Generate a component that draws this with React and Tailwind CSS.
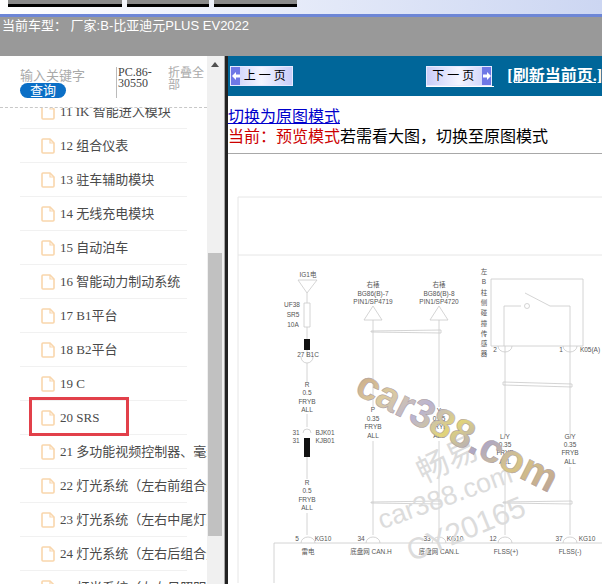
const CJK = "'Liberation Serif', 'Noto Sans CJK SC', serif";

const ROWS = [
  '11 IK 智能进入模块', '12 组合仪表', '13 驻车辅助模块', '14 无线充电模块', '15 自动泊车',
  '16 智能动力制动系统', '17 B1平台', '18 B2平台', '19 C', '20 SRS',
  '21 多功能视频控制器、毫米波雷达', '22 灯光系统（左右前组合灯）', '23 灯光系统（左右中尾灯）',
  '24 灯光系统（左右后组合灯）', '25 灯光系统（左右日照明灯）',
];

// x, y, text for the wiring diagram, in page coordinates
const LABELS = [
  [308, 278, 'IG1电'], [292, 308, 'UF38'], [293, 318, 'SR5'], [293, 328, '10A'], [308, 358, '27 B1C'],
  [373, 288, '右裱'], [373, 297, 'BG86(B)-7'], [373, 305, 'PIN1/SP4719'],
  [439, 288, '右裱'], [439, 297, 'BG86(B)-8'], [439, 305, 'PIN1/SP4720'],
  [307, 388, 'R'], [307, 396, '0.5'], [307, 405, 'FRYB'], [307, 413, 'ALL'],
  [296, 436, '31'], [296, 444, '31'], [325, 436, 'BJK01'], [325, 444, 'KJB01'],
  [307, 486, 'R'], [307, 494, '0.5'], [307, 503, 'FRYB'], [307, 511, 'ALL'],
  [373, 413, 'P'], [373, 422, '0.35'], [373, 430, 'FRYB'], [373, 439, 'ALL'],
  [439, 414, 'Y'], [439, 422, '0.35'], [439, 430, 'FRYB'], [439, 439, 'ALL'],
  [505, 440, 'L/Y'], [505, 448, '0.35'], [505, 456, 'FRYB'], [505, 465, 'ALL'],
  [570, 440, 'G/Y'], [570, 448, '0.35'], [570, 456, 'FRYB'], [570, 465, 'ALL'],
  [495, 353, '2'], [561, 353, '1'], [590, 353, 'K05(A)'],
  [297, 542, '5'], [323, 542, 'KG10'], [361, 542, '34'], [427, 542, '33'], [455, 542, 'KG10'],
  [493, 542, '12'], [559, 542, '37'], [587, 542, 'KG10'],
  [308, 555, '雷电'], [371, 555, '底盘网 CAN.H'], [439, 555, '底盘网 CAN.L'], [506, 555, 'FLSS(+)'], [570, 555, 'FLSS(-)'],
];

const SIDE_TEXT = ['左', 'B', '柱', '侧', '碰', '撞', '传', '感', '器'];

function FileIcon() {
  return (
    <svg width="14" height="16" viewBox="0 0 14 16" fill="none" className="shrink-0">
      <path d="M1 2a1 1 0 0 1 1-1h7l4 4v9a1 1 0 0 1-1 1H2a1 1 0 0 1-1-1z" stroke="#f9d6ac" strokeWidth="1.6" />
      <path d="M9 1v4h4" stroke="#f9d6ac" strokeWidth="1.2" />
    </svg>
  );
}

function PageButton({ label, next }) {
  const cap = (
    <span className="w-[9px] h-full bg-[#6f78e6] flex items-center justify-center">
      <svg width="8" height="8" viewBox="0 0 8 8" className={next ? '' : 'rotate-180'}>
        <path d="M0 4l4-4v2.500h4v3H4V8z" fill="#fff" transform="rotate(180 4 4)" />
      </svg>
    </span>
  );
  return (
    <div className="w-[66px] h-[20px] flex items-stretch border border-[#e6e9ff] bg-gradient-to-r from-[#c9cdf8] via-[#f4f5ff] to-[#c9cdf8] text-[12px] text-black">
      {!next && cap}
      <span className="flex-1 text-center leading-[18px] tracking-[3px]">{label}</span>
      {next && cap}
    </div>
  );
}

function Diagram() {
  return (
    <svg viewBox="228 155 374 429" className="block w-[374px] h-[429px]" fill="none">
      <defs>
        <linearGradient id="mark" gradientUnits="userSpaceOnUse" x1="355" y1="385" x2="555" y2="490">
          <stop offset="0" stopColor="#c7a585" />
          <stop offset="0.18" stopColor="#dccb9f" />
          <stop offset="0.32" stopColor="#b9b3d4" />
          <stop offset="0.46" stopColor="#e2d479" />
          <stop offset="0.6" stopColor="#aea7c6" />
          <stop offset="0.75" stopColor="#d8c585" />
          <stop offset="1" stopColor="#b89c9a" />
        </linearGradient>
      </defs>

      <g stroke="#e6e6e6">
        <path d="M238 584V198H602M238 256H602" />
      </g>

      <g stroke="#c9c9c9" strokeWidth="0.8">
        <path d="M298 281H317L307 294ZM307 294V304M304 304H310V328H304ZM307 328V340M307 351V358M307 364V384M307 415V428M307 458V480M307 514V536" />
        <path d="M303 434a4 4 0 0 1 8 0" />
        <path d="M301 358a6 6 0 0 0 12 0" />
        <path d="M364 321H382L373 307ZM430 321H448L439 307ZM373 321V408M373 442V536M439 321V408M439 442V536" />
        <path d="M371 333L441 334V331L371 332ZM371 504L441 505V502L371 503Z" />
        <path d="M491 347V280H583V347ZM504 347V307H521M525 294L550 307H570V347" />
        <circle cx="527" cy="307" r="2.5" />
        <path d="M505 347V436M570 347V436M505 468V536M570 468V536" />
        <path d="M503 386L572 388V385L503 383ZM503 504L572 505V502L503 503Z" />
        <path d="M498 347a7 6 0 0 0 14 0M563 347a7 6 0 0 0 14 0" />
        <path d="M274 584V544H602" />
        <path d="M301 544a7 6 0 0 1 14 0M366 544a7 6 0 0 1 14 0M432 544a7 6 0 0 1 14 0M498 544a7 6 0 0 1 14 0M563 544a7 6 0 0 1 14 0" />
      </g>
      <rect x="304" y="340" width="6" height="11" fill="#111" />
      <rect x="304" y="439" width="6" height="19" fill="#111" />

      <g fill="#555" fontSize="6.5" textAnchor="middle" fontFamily="'Liberation Sans', 'Noto Sans CJK SC', sans-serif">
        {LABELS.map(([x, y, t], i) => (
          <text key={i} x={x} y={y}>{t}</text>
        ))}
        {SIDE_TEXT.map((t, i) => (
          <text key={t} x={484} y={275 + i * 10.3}>{t}</text>
        ))}
      </g>

      <g fontFamily="'Liberation Sans', 'Noto Sans CJK SC', sans-serif" fill="#dcdcdc">
        <text x="447" y="472" fontSize="32" textAnchor="middle" transform="rotate(-26 447 460)">畅易</text>
        <text x="445" y="507" fontSize="27" textAnchor="middle" transform="rotate(-20 445 498)">car388.com</text>
        <text x="466" y="540" fontSize="30" textAnchor="middle" transform="rotate(-22 466 530)">CY20165</text>
      </g>
      <text
        x="455" y="445" fontSize="40" fontWeight="bold" textAnchor="middle" transform="rotate(27 455 437)"
        fontFamily="'Liberation Sans', sans-serif" fill="url(#mark)" stroke="#a89aa0" strokeWidth="0.5"
      >
        car388.com
      </text>
    </svg>
  );
}

export default function App() {
  return (
    <div className="w-[602px] h-[584px] overflow-hidden flex flex-col bg-white" style={{ fontFamily: "'Liberation Sans', 'Noto Sans CJK SC', sans-serif" }}>
      {/* top strip */}
      <div className="h-[14px] shrink-0 flex gap-[5px] pl-[8px] bg-gradient-to-r from-white to-[#ccd6f2]">
        {[114, 82, 83].map((w, i) => (
          <div key={i} style={{ width: w }} className="h-[7px] bg-[#8a8a8a] border-b-[3px] border-black" />
        ))}
      </div>
      <div className="h-[3px] shrink-0 bg-[#6d86d6]" />

      {/* car model bar */}
      <div className="h-[39px] shrink-0 bg-[#999999] pl-[2px] pt-[1px] text-[13px] leading-[16px] text-white">
        当前车型： 厂家:B-比亚迪元PLUS EV2022
      </div>

      <div className="flex-1 min-h-0 flex">
        {/* sidebar */}
        <div className="w-[207px] shrink-0 flex flex-col overflow-hidden bg-white" style={{ fontFamily: CJK }}>
          <div className="h-[52px] shrink-0 flex pl-[20px] pt-[11px] border-b border-dashed border-[#c8c8c8]">
            <div className="w-[96px] pt-[1px] text-[13px] text-[#aaaaaa] leading-[16px]">
              <div>输入关键字</div>
              <div className="w-[46px] h-[15px] mt-[-1px] rounded-lg bg-[#0b6fc6] text-white text-center text-[13px] leading-[15px]">查询</div>
            </div>
            <div className="w-[52px] h-[31px] border-l border-[#bbbbbb] pl-[1px] text-[12px] leading-[11px] text-[#444444]">
              <div className="w-[36px]">PC.86-30550</div>
            </div>
            <div className="w-[37px] text-[12px] leading-[12px] text-[#aaaaaa]">折叠全部</div>
          </div>
          <div className="flex-1 min-h-0 overflow-hidden">
            <div className="mt-[-13px]">
              {ROWS.map((t, i) => (
                <div key={t} className="relative h-[34px]">
                  <div className="h-full ml-[20px] w-[167px] border-b border-[#f1f1f1]" />
                  <div className="absolute inset-0 pl-[41px] flex items-center gap-[5px] text-[13px] text-[#4a4a4a] whitespace-nowrap overflow-hidden">
                    <FileIcon />
                    <span>{t}</span>
                  </div>
                  {i === 9 && <div className="absolute left-[29px] top-[-4px] w-[100px] h-[39px] border-[3px] border-[#e2404a]" />}
                </div>
              ))}
            </div>
          </div>
        </div>

        {/* scrollbar */}
        <div className="w-[17px] shrink-0 bg-[#f0f0f0] flex flex-col items-start pl-[1px]">
          <svg width="8" height="5" viewBox="0 0 8 5" className="mt-[6px] ml-[3px] shrink-0"><path d="M4 0l4 5H0z" fill="#505050" /></svg>
          <div className="w-[14px] h-[283px] mt-[186px] bg-[#c1c1c1]" />
        </div>
        <div className="w-[1px] shrink-0 bg-[#a6a6a6]" />
        <div className="w-[3px] shrink-0 bg-[#222222]" />

        {/* main */}
        <div className="flex-1 min-w-0 overflow-hidden flex flex-col">
          <div className="h-[40px] shrink-0 bg-[#006699] flex items-center pl-[2px] whitespace-nowrap">
            <PageButton label="上一页" />
            <div className="ml-[133px] border-b border-white pr-[2px]"><PageButton label="下一页" next /></div>
            <a className="ml-[13px] text-[16px] font-bold text-white underline" style={{ fontFamily: CJK }}>[刷新当前页.]</a>
          </div>
          <div className="h-[58px] shrink-0 pt-[11px] text-[16px] leading-[20px] border-b border-[#a8a8a8]">
            <a className="block text-[#0000cc] underline">切换为原图模式</a>
            <div className="text-black"><span className="text-[#cc0000]">当前：预览模式</span>若需看大图，切换至原图模式</div>
          </div>
          <Diagram />
        </div>
      </div>
    </div>
  );
}
